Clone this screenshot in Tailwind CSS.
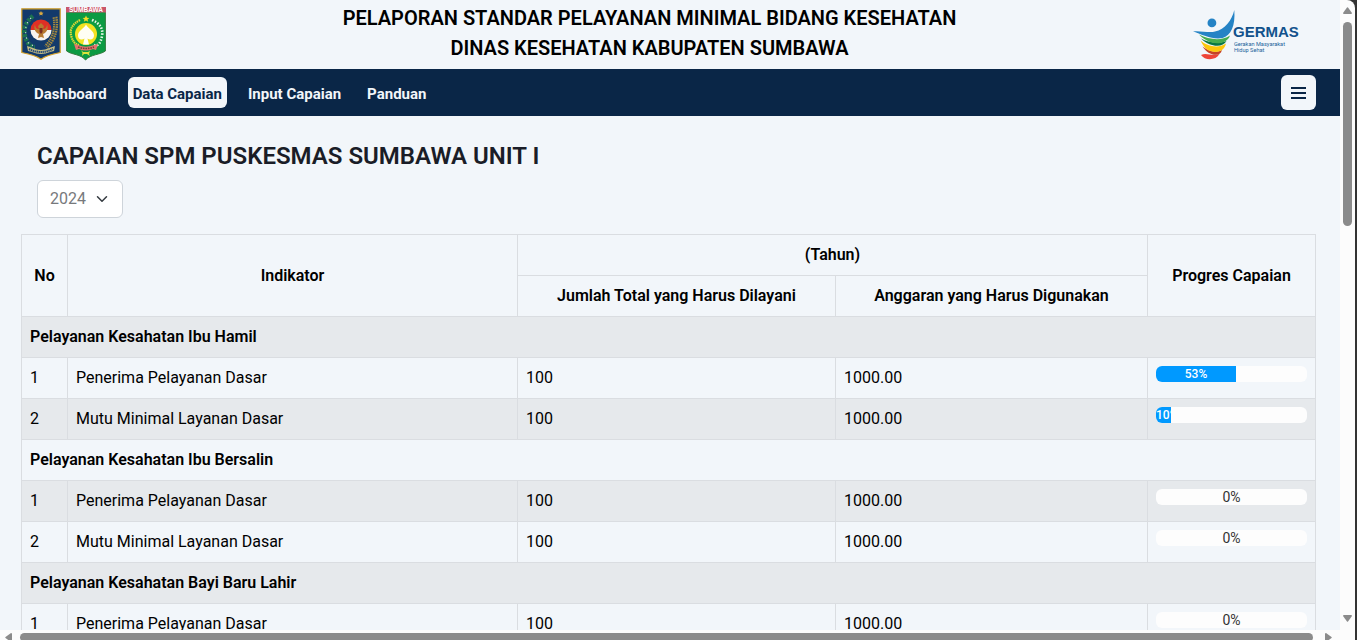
<!DOCTYPE html>
<html lang="id">
<head>
<meta charset="utf-8">
<meta name="viewport" content="width=device-width, initial-scale=1">
<title>Pelaporan SPM Bidang Kesehatan</title>
<script src="https://cdn.jsdelivr.net/npm/@tailwindcss/browser@4"></script>
</head>
<body class="flex h-screen overflow-hidden bg-[#333333] pr-[2px] font-[Roboto,sans-serif] text-base text-black">
<div class="flex min-w-0 flex-1 overflow-hidden rounded-tr-lg bg-[#fcfcfc]">
  <div class="flex min-w-0 flex-1 flex-col">
    <div class="min-h-0 flex-1 overflow-hidden bg-[#f2f6fa]">

      <header class="flex h-[69px] items-start justify-between pr-[40px] pl-[21px]">
        <div class="flex gap-[5px] pt-[7px]">
          <svg class="h-[54px] w-[40px]" viewBox="0 0 40 54" role="img" aria-label="Kementerian Dalam Negeri">
            <path d="M.8 1.8H39.2V45.5C34 46.5 25 48.5 20 52.2C15 48.5 6 46.5.8 45.5Z" fill="#123a6b" stroke="#d5a128" stroke-width="1.2"/>
            <path d="M20 4l.8 1.500 1.700.2-1.200 1.200.3 1.700-1.600-.8-1.600.8.3-1.700-1.200-1.200 1.700-.2z" fill="#d9a941"/>
            <path d="M12 9Q1 18 4 29T14 40" fill="none" stroke="#1c7350" stroke-width="4.500" stroke-dasharray="3 1.200"/>
            <path d="M10 11Q3 18 5 29T13 38" fill="none" stroke="#c5d8d2" stroke-width="1.200" stroke-dasharray="1.200 4"/>
            <path d="M34 10Q37 28 25 40" fill="none" stroke="#a58a3e" stroke-width="5" stroke-dasharray="1.500 .8"/>
            <path d="M34 10Q37 28 25 40" fill="none" stroke="#2d4659" stroke-width=".8"/>
            <path d="M9.500 23a10.500 10.500 0 0 1 21 0z" fill="#df2f25"/>
            <path d="M9.500 23a10.500 10.500 0 0 0 21 0z" fill="#f7f4ef"/>
            <path d="M14 17q0 5 4 5l-1-3 3-3 3 3-1 3q4 0 4-5 2 6-2 9l-2 1 1 4-3-1-3 1 1-4-2-1q-4-3-2-9z" fill="#b77a30"/>
            <path d="M18.500 21h3v4l-1.500 2-1.500-2z" fill="#7b2e20"/>
            <path d="M6 39l6 2q8 4 16 0l6-2-1 5-4 1q-9 4-18 0l-4-1z" fill="#c7bd83"/>
            <path d="M8 42q12 6 24 0" fill="none" stroke="#244b79" stroke-width="2" stroke-dasharray="1.400 .6"/>
          </svg>
          <svg class="h-[54px] w-[40px]" viewBox="0 0 40 54" role="img" aria-label="Kabupaten Sumbawa">
            <path d="M.6 1V44C6 48 15 47 19.500 53C25 47 34 48 39.400 44V1Z" fill="#0b9b43" stroke="#327b3e"/>
            <path d="M0 0h40v5.500H0z" fill="#c9566a"/>
            <text x="20" y="5" text-anchor="middle" font-family="Liberation Sans" font-size="6.500" font-weight="700" fill="#fff">SUMBAWA</text>
            <path d="M20 8.500l1 2.200 2.400.2-1.900 1.600.7 2.300-2.200-1.200-2.200 1.200.7-2.300-1.900-1.600 2.400-.2z" fill="#f5dd27"/>
            <path d="M14 13Q3 19 5 28T13 38" fill="none" stroke="#e1d736" stroke-width="2.200" stroke-dasharray="1.500 .7"/>
            <path d="M26 13Q38 18 36 29T28 38" fill="none" stroke="#e7f6e7" stroke-width="2.600" stroke-dasharray="1.500 1.500"/>
            <circle cx="20" cy="27" r="11" fill="#f2e221"/>
            <path d="M20 17.500c2 4 8 6 8 11 0 4-4 5-6.500 3l1.500 6h-6l1.500-6c-3 2-6.500 1-6.500-3 0-5 6-7 8-11z" fill="#fffef4"/>
            <path d="M8 37l4 1q8 3.500 16 0l4-1-2 6-3-1q-7 3-14 0l-3 1z" fill="#e4736d"/>
            <path d="M12 40q8 3 16 0" fill="none" stroke="#7d3f36" stroke-width="1.600" stroke-dasharray="1.700 .8"/>
            <path d="M15 43l2 2h5l2-1-1 3 1 2-3-2h-3l-2 2 .5-3z" fill="#dbe33c"/>
          </svg>
        </div>
        <h1 class="pt-[3px] text-center text-xl leading-[30px] font-semibold">PELAPORAN STANDAR PELAYANAN MINIMAL BIDANG KESEHATAN<br>DINAS KESEHATAN KABUPATEN SUMBAWA</h1>
        <svg class="mt-[9px] h-[52px] w-[107px]" viewBox="0 0 107 52" role="img" aria-label="GERMAS">
          <circle cx="18.900" cy="13.900" r="4.400" fill="#2583c5"/>
          <path d="M8 46C13 43 19 47.500 26.500 45C23 51.500 12 52 8 46Z" fill="#ee4437"/>
          <path d="M9.500 37.500C15 42 23 44.500 29 41C27 49 15 46.500 9.500 37.500Z" fill="#c54227"/>
          <path d="M7.500 31.500C14 37 25 40 33 34.500C30.500 46 16 44.500 11 37.500C9.500 35.500 8.500 33.500 7.500 31.500Z" fill="#fdc70c"/>
          <path d="M8 29.500C15 33.500 25 35 33.500 32C30 39 17 38.500 8 29.500Z" fill="#087744"/>
          <path d="M6 25.500C16 30.500 28 32.500 37 26.500C34 35.500 21 36 14 31.500C10 29.500 8 27.500 6 25.500Z" fill="#45ad4f"/>
          <path d="M0 22.300C8 21.500 16 24 22 22.500C32 20.500 39 11 41.300 1C42.500 17 38 26.500 29.500 29C20 31 10 26 0 22.300Z" fill="#2583c5"/>
          <text x="40" y="28" font-family="Liberation Sans" font-size="15" font-weight="700" fill="#12528c">GERMAS</text>
          <text x="41" y="37" font-family="Roboto" font-size="5.600" fill="#22639a">Gerakan Masyarakat</text>
          <text x="41" y="42.500" font-family="Roboto" font-size="5.600" fill="#22639a">Hidup Sehat</text>
        </svg>
      </header>

      <nav class="flex h-[47px] items-center justify-between bg-[#0a2647] pr-6 pl-[29px]">
        <div class="flex gap-4 text-[15px] leading-[23px] font-bold text-[#f2f6fa]">
          <a href="#" class="rounded-md px-[5px] pt-[6px] pb-[2px]">Dashboard</a>
          <a href="#" class="rounded-md bg-[#f2f6fa] px-[5px] pt-[6px] pb-[2px] text-[#0a2647]" aria-current="page">Data Capaian</a>
          <a href="#" class="rounded-md px-[5px] pt-[6px] pb-[2px]">Input Capaian</a>
          <a href="#" class="rounded-md px-[5px] pt-[6px] pb-[2px]">Panduan</a>
        </div>
        <button type="button" aria-label="Menu" class="flex size-[35px] items-center justify-center rounded-md bg-[#f2f6fa]">
          <svg class="size-[15px]" viewBox="0 0 15 15" stroke="#0a2647" stroke-width="2"><path d="M0 3h15M0 8h15M0 13h15"/></svg>
        </button>
      </nav>

      <main class="pr-6 pl-[21px]">
        <h2 class="pt-[26px] pl-4 text-2xl leading-[29px] font-semibold text-[#1a1d27]">CAPAIAN SPM PUSKESMAS SUMBAWA UNIT I</h2>
        <div class="relative mt-[9px] ml-4 w-[86px]">
          <select aria-label="Tahun" class="block h-[38px] w-full appearance-none rounded-md border border-[#ced4da] bg-white pr-6 pl-3 text-base text-[#77797c]">
            <option>2024</option>
          </select>
          <svg class="pointer-events-none absolute top-[13px] right-[15px] size-3" viewBox="0 0 16 16" fill="none" stroke="#343a40" stroke-width="2" stroke-linecap="round" stroke-linejoin="round"><path d="M2 5l6 6 6-6"/></svg>
        </div>

        <table class="mt-4 w-full table-fixed border-collapse text-left leading-6 [&_td]:border [&_td]:border-[#dadde1] [&_td]:p-2 [&_th]:border [&_th]:border-[#dadde1] [&_th]:p-2 [&_th]:font-semibold [&_tbody>tr:nth-child(odd)]:bg-[#e6e9ec]">
          <colgroup><col class="w-[46px]"><col class="w-[450px]"><col class="w-[318px]"><col class="w-[312px]"><col class="w-[168px]"></colgroup>
          <thead class="text-center">
            <tr><th rowspan="2" scope="col">No</th><th rowspan="2" scope="col">Indikator</th><th colspan="2" scope="colgroup">(Tahun)</th><th rowspan="2" scope="col">Progres Capaian</th></tr>
            <tr><th scope="col">Jumlah Total yang Harus Dilayani</th><th scope="col">Anggaran yang Harus Digunakan</th></tr>
          </thead>
          <tbody>
            <tr><th colspan="5" scope="rowgroup">Pelayanan Kesahatan Ibu Hamil</th></tr>
            <tr><td>1</td><td>Penerima Pelayanan Dasar</td><td>100</td><td>1000.00</td><td class="align-top"><div class="h-4 overflow-hidden rounded-md bg-[#fdfdfd]"><div class="h-4 overflow-hidden bg-[#0099ff] text-center text-xs leading-4 font-medium text-white" style="width:53%">53%</div></div></td></tr>
            <tr><td>2</td><td>Mutu Minimal Layanan Dasar</td><td>100</td><td>1000.00</td><td class="align-top"><div class="h-4 overflow-hidden rounded-md bg-[#fdfdfd]"><div class="h-4 overflow-hidden bg-[#0099ff] text-center text-xs leading-4 font-medium text-white" style="width:10%">10%</div></div></td></tr>
            <tr><th colspan="5" scope="rowgroup">Pelayanan Kesahatan Ibu Bersalin</th></tr>
            <tr><td>1</td><td>Penerima Pelayanan Dasar</td><td>100</td><td>1000.00</td><td class="align-top"><div class="h-4 rounded-md bg-[#fdfdfd] text-center text-sm leading-4 text-[#333]">0%</div></td></tr>
            <tr><td>2</td><td>Mutu Minimal Layanan Dasar</td><td>100</td><td>1000.00</td><td class="align-top"><div class="h-4 rounded-md bg-[#fdfdfd] text-center text-sm leading-4 text-[#333]">0%</div></td></tr>
            <tr><th colspan="5" scope="rowgroup">Pelayanan Kesahatan Bayi Baru Lahir</th></tr>
            <tr><td>1</td><td>Penerima Pelayanan Dasar</td><td>100</td><td>1000.00</td><td class="align-top"><div class="h-4 rounded-md bg-[#fdfdfd] text-center text-sm leading-4 text-[#333]">0%</div></td></tr>
          </tbody>
        </table>
      </main>
    </div>

    <div class="flex h-[10px] shrink-0 items-start gap-2 overflow-hidden pt-[3px] pr-2 pl-[5px]" aria-hidden="true">
      <svg class="h-[9px] w-[7px] shrink-0" viewBox="0 0 7 9" fill="#8b8b8b"><path d="M6 0q1 0 1 1v7q0 1-1 1L.5 5Q0 4.500.5 4z"/></svg>
      <div class="h-[9px] flex-1 rounded-full bg-[#8b8b8b]"></div>
      <svg class="ml-1 h-[9px] w-[7px] shrink-0" viewBox="0 0 7 9" fill="#8b8b8b"><path d="M1 0Q0 0 0 1v7q0 1 1 1l5.500-4q.5-.5 0-1z"/></svg>
    </div>
  </div>

  <div class="flex w-[15px] shrink-0 flex-col items-center pt-[7px] pb-[18px]" aria-hidden="true">
    <svg class="h-[7px] w-[9px] shrink-0" viewBox="0 0 9 7" fill="#8b8b8b"><path d="M0 6q0 1 1 1h7q1 0 1-1L5 .5Q4.500 0 4 .5z"/></svg>
    <div class="mt-2 h-[204px] w-[9px] rounded-full bg-[#8b8b8b]"></div>
    <svg class="mt-auto h-[7px] w-[9px] shrink-0" viewBox="0 0 9 7" fill="#8b8b8b"><path d="M0 1q0-1 1-1h7q1 0 1 1L5 6.500q-.5.5-1 0z"/></svg>
  </div>
</div>
</body>
</html>
